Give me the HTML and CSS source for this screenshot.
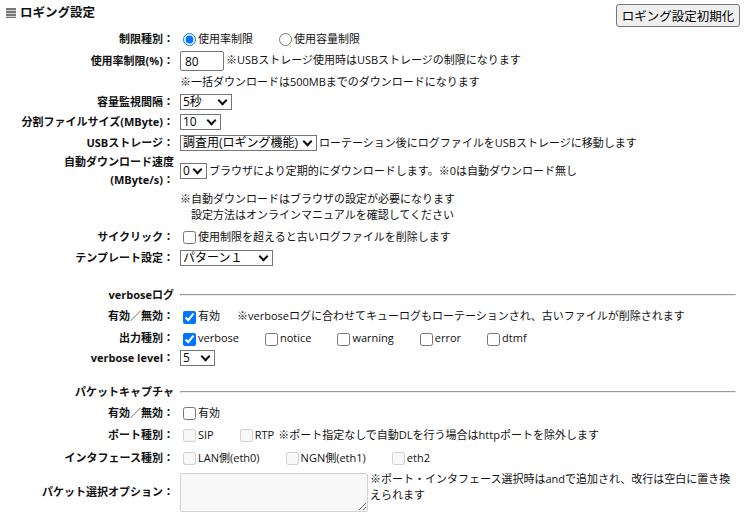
FILE: index.html
```html
<!DOCTYPE html>
<html lang="ja">
  <head>
    <meta charset="UTF-8" />
    <meta name="viewport" content="width=device-width, initial-scale=1.0" />
    <title>ロギング設定</title>
    <link rel="stylesheet" href="styles.css">
  </head>
  <body>
    <header class="page-head">
      <h1><span class="head-icon"></span>ロギング設定</h1>
      <button type="button" class="reset-btn">ロギング設定初期化</button>
    </header>

    <table class="settings">
      <tr class="row-check">
        <th>制限種別：</th>
        <td><label class="opt"><input type="radio" name="limit" checked />使用率制限</label><label class="opt"><input type="radio" name="limit" />使用容量制限</label></td>
      </tr>
      <tr class="row-input">
        <th>使用率制限(%)：</th>
        <td><input type="text" class="num" value="80" />※USBストレージ使用時はUSBストレージの制限になります</td>
      </tr>
      <tr class="row-note">
        <th></th>
        <td>※一括ダウンロードは500MBまでのダウンロードになります</td>
      </tr>
      <tr class="row-select">
        <th>容量監視間隔：</th>
        <td>
          <span class="pick"><select class="sel-interval">
            <option>5秒</option>
            <option>10秒</option>
            <option>30秒</option>
          </select></span>
        </td>
      </tr>
      <tr class="row-select-sm">
        <th>分割ファイルサイズ(MByte)：</th>
        <td>
          <span class="pick"><select class="sel-size">
            <option>10</option>
            <option>20</option>
            <option>50</option>
          </select></span>
        </td>
      </tr>
      <tr class="row-select">
        <th>USBストレージ：</th>
        <td><span class="pick"><select class="sel-usb">
            <option>調査用(ロギング機能)</option>
            <option>使用しない</option>
          </select></span>ローテーション後にログファイルをUSBストレージに移動します</td>
      </tr>
      <tr class="row-multi">
        <th class="two-line">自動ダウンロード速度<br />(MByte/s)：</th>
        <td><span class="pick"><select class="sel-speed">
            <option>0</option>
            <option>1</option>
            <option>2</option>
          </select></span>ブラウザにより定期的にダウンロードします。※0は自動ダウンロード無し</td>
      </tr>
      <tr class="row-multi">
        <th></th>
        <td class="note">※自動ダウンロードはブラウザの設定が必要になります<br />　設定方法はオンラインマニュアルを確認してください</td>
      </tr>
      <tr class="row-check">
        <th>サイクリック：</th>
        <td><label><input type="checkbox" />使用制限を超えると古いログファイルを削除します</label></td>
      </tr>
      <tr class="row-select-sm">
        <th>テンプレート設定：</th>
        <td>
          <span class="pick"><select class="sel-template">
            <option>パターン１</option>
            <option>パターン２</option>
          </select></span>
        </td>
      </tr>

      <tr class="row-section first">
        <th>verboseログ</th>
        <td><hr /></td>
      </tr>
      <tr class="row-check-sm">
        <th>有効／無効：</th>
        <td><label class="opt-short"><input type="checkbox" checked />有効</label>※verboseログに合わせてキューログもローテーションされ、古いファイルが削除されます</td>
      </tr>
      <tr class="row-check-sm">
        <th>出力種別：</th>
        <td><label class="opt"><input type="checkbox" checked />verbose</label><label class="opt"><input type="checkbox" />notice</label><label class="opt"><input type="checkbox" />warning</label><label class="opt"><input type="checkbox" />error</label><label class="opt"><input type="checkbox" />dtmf</label></td>
      </tr>
      <tr class="row-level">
        <th>verbose level：</th>
        <td>
          <span class="pick"><select class="sel-level">
            <option>5</option>
            <option>4</option>
            <option>3</option>
          </select></span>
        </td>
      </tr>

      <tr class="row-section">
        <th>パケットキャプチャ</th>
        <td><hr /></td>
      </tr>
      <tr class="row-check-xs">
        <th>有効／無効：</th>
        <td><label><input type="checkbox" />有効</label></td>
      </tr>
      <tr class="row-check">
        <th>ポート種別：</th>
        <td><label class="opt"><input type="checkbox" disabled />SIP</label><label class="opt-tight"><input type="checkbox" disabled />RTP</label>※ポート指定なしで自動DLを行う場合はhttpポートを除外します</td>
      </tr>
      <tr class="row-check">
        <th>インタフェース種別：</th>
        <td><label class="opt"><input type="checkbox" disabled />LAN側(eth0)</label><label class="opt"><input type="checkbox" disabled />NGN側(eth1)</label><label class="opt"><input type="checkbox" disabled />eth2</label></td>
      </tr>
      <tr class="row-area">
        <th>パケット選択オプション：</th>
        <td class="area-cell">
          <div class="area-wrap">
            <textarea disabled></textarea>
            <span>※ポート・インタフェース選択時はandで追加され、改行は空白に置き換えられます</span>
          </div>
        </td>
      </tr>
    </table>
  </body>
</html>
```

FILE: styles.css
```css
* {
  box-sizing: border-box;
}

body {
  margin: 0;
  background-color: #fff;
  color: #111;
  font-family: "Open Sans", "Noto Sans CJK JP", sans-serif;
  font-size: 11px;
  line-height: 16px;
}

.page-head {
  display: flex;
  justify-content: space-between;
  align-items: flex-start;
  height: 27px;
  padding: 4px 6px 0 6px;
}

.page-head h1 {
  display: flex;
  align-items: center;
  gap: 4px;
  margin: 0;
  padding-top: 1px;
  font-size: 12.5px;
  font-weight: bold;
}

.head-icon {
  width: 10px;
  height: 10px;
  background: repeating-linear-gradient(#777 0 2px, #cfcfcf 2px 3px);
}

.reset-btn {
  width: 124px;
  height: 23px;
  padding: 0;
  border: 1px solid #767676;
  border-radius: 3px;
  background-color: #efefef;
  color: #000;
  font-family: "Open Sans", "Noto Sans CJK JP", sans-serif;
  font-size: 12.5px;
}

/* settings table */
.settings {
  border-collapse: collapse;
  margin-left: 8px;
  width: 732px;
}

.settings th {
  width: 166px;
  padding: 0;
  text-align: right;
  font-weight: bold;
  white-space: nowrap;
}

.settings td {
  padding: 0 0 0 6px;
  white-space: nowrap;
}

.row-check { height: 23px; }
.row-check-sm { height: 22px; }
.row-check-xs { height: 21px; }
.row-input { height: 22px; }
.row-note { height: 19px; }
.row-select { height: 21px; }
.row-select-sm { height: 20px; }
.row-multi { height: 36px; }
.row-level { height: 18px; }
.row-area { height: 46px; }

.row-section th,
.row-section td {
  height: 35px;
  padding-top: 14px;
}

.row-section.first th,
.row-section.first td {
  height: 37px;
  padding-top: 16px;
}

.two-line {
  line-height: 18px;
}

hr {
  margin: 0 4px 0 0;
}

input[type="radio"],
input[type="checkbox"] {
  margin: 0 2px 0 3px;
  vertical-align: middle;
}

.opt {
  margin-right: 23px;
}

.opt-short {
  margin-right: 17px;
}

.opt-tight {
  margin-right: 4px;
}

.num {
  width: 44px;
  height: 20px;
  margin: 0 2px 0 0;
  padding: 0 4px;
  border: 1px solid #767676;
  border-radius: 2px;
  font-family: "Open Sans", "Noto Sans CJK JP", sans-serif;
  font-size: 12px;
  vertical-align: middle;
}

/* select with drawn chevron */
.pick {
  position: relative;
  display: inline-block;
  margin-right: 2px;
  vertical-align: top;
}

.pick::after {
  content: "";
  position: absolute;
  right: 6px;
  top: 3px;
  width: 5px;
  height: 5px;
  border-right: 2px solid #111;
  border-bottom: 2px solid #111;
  transform: rotate(45deg);
  pointer-events: none;
}

select {
  appearance: none;
  display: block;
  height: 16px;
  margin: 0;
  padding: 0 0 0 2px;
  border: 1px solid #767676;
  border-radius: 0;
  background-color: #fff;
  color: #000;
  font-family: "Open Sans", "Noto Sans CJK JP", sans-serif;
  font-size: 12px;
  line-height: 14px;
}

.sel-interval { width: 52px; }
.sel-size { width: 41px; }
.sel-usb { width: 137px; }
.sel-speed { width: 27px; }
.sel-template { width: 93px; }
.sel-level { width: 35px; }

.area-cell {
  vertical-align: top;
  padding-top: 4px !important;
}

.area-wrap {
  display: flex;
  align-items: flex-start;
}

.area-wrap textarea {
  flex: none;
  width: 188px;
  height: 39px;
  margin: 0 2px 0 0;
}

.area-wrap span {
  white-space: normal;
  line-height: 16px;
  margin-top: -2px;
}
```
